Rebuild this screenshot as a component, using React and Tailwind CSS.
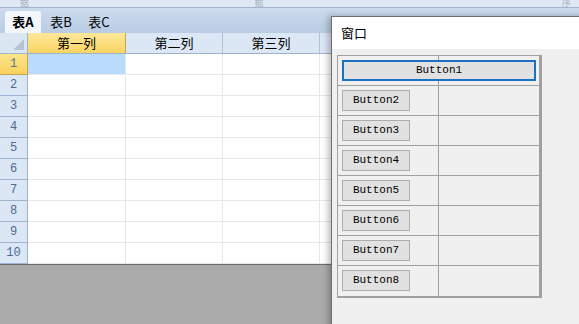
export default function App() {
  const rows = [1, 2, 3, 4, 5, 6, 7, 8, 9, 10];
  const cols = ["第一列", "第二列", "第三列", "第四列"];
  const btns = ["Button2", "Button3", "Button4", "Button5", "Button6", "Button7", "Button8"];
  const cjk = { fontFamily: '"Noto Sans CJK SC", "Noto Sans", sans-serif' };
  const mono = { fontFamily: '"Liberation Mono", "DejaVu Sans Mono", monospace' };
  return (
    <div className="relative w-[579px] h-[324px] overflow-hidden bg-[#ababab]" style={cjk}>
      <div className="flex flex-col">
        <div className="h-[7px] bg-[#dfe9f5] overflow-hidden flex items-end">
          <span className="ml-[20px] h-[7px] overflow-hidden flex items-end text-[9px] leading-[9px] text-[#a3aebb]">导入数据</span>
          <span className="ml-[200px] h-[7px] overflow-hidden flex items-end text-[9px] leading-[9px] text-[#a3aebb]">数据</span>
          <span className="ml-[290px] h-[7px] overflow-hidden flex items-end text-[9px] leading-[9px] text-[#a3aebb]">排序</span>
        </div>
        <div className="h-px bg-[#a3b6cd]" />
        <div className="h-[25px] bg-gradient-to-b from-[#ccdbee] to-[#b9cce3] flex items-end pl-[5px] gap-[2px]">
          <div className="h-[22px] w-[36px] bg-[#f3f7fc] rounded-t-[3px] flex items-center justify-center text-[13px] font-bold text-black">表A</div>
          <div className="h-[22px] w-[36px] flex items-center justify-center text-[13px] text-black">表B</div>
          <div className="h-[22px] w-[36px] flex items-center justify-center text-[13px] text-black">表C</div>
        </div>
        <div className="bg-white">
          <div className="flex h-[21px] border-b border-[#9eb3cc]">
            <div className="w-[28px] shrink-0 bg-[#dbe6f3] border-r border-[#9eb3cc] relative">
              <svg className="absolute right-[3px] bottom-[3px]" width="11" height="11" viewBox="0 0 11 11">
                <polygon points="11,0 11,11 0,11" fill="#b4c3d6" />
              </svg>
            </div>
            {cols.map((c, i) => (
              <div
                key={c}
                className={
                  i === 0
                    ? "w-[98px] shrink-0 bg-gradient-to-b from-[#fde79a] to-[#f9d461] border-r border-[#c9a550] flex items-center justify-center text-[13px] text-black"
                    : "w-[97px] shrink-0 bg-[#dbe7f4] border-r border-[#afc2d8] flex items-center justify-center text-[13px] text-black"
                }
              >
                {c}
              </div>
            ))}
          </div>
          {rows.map((r) => (
            <div key={r} className="flex h-[21px]">
              <div
                className={
                  r === 1
                    ? "w-[28px] shrink-0 bg-gradient-to-b from-[#fde38a] to-[#f9d25d] border-r border-b border-[#c9a550] flex items-center justify-center text-[12px] text-[#5a6f8c]"
                    : "w-[28px] shrink-0 bg-[#dbe7f4] border-r border-b border-[#9eb3cc] flex items-center justify-center text-[12px] text-[#4d6a93]"
                }
                style={mono}
              >
                {r}
              </div>
              <div className={(r === 1 ? "bg-[#b9dbfc] " : "") + "w-[98px] shrink-0 border-r border-b border-[#e8e8e8]"} />
              <div className="w-[97px] shrink-0 border-r border-b border-[#e8e8e8]" />
              <div className="w-[97px] shrink-0 border-r border-b border-[#e8e8e8]" />
              <div className="w-[97px] shrink-0 border-r border-b border-[#e8e8e8]" />
            </div>
          ))}
        </div>
        <div className="h-px bg-[#6b6b6b]" />
      </div>

      <div className="absolute left-[331px] top-[16px] w-[260px] h-[320px] border-l border-t border-[#6e6e6e] bg-[#f0f0f0] shadow-[-3px_0_6px_rgba(0,0,0,0.25)] flex flex-col">
        <div className="h-[32px] bg-white flex items-center pl-[9px] text-[13px] text-black">窗口</div>
        <div className="pl-[5px] pt-[6px]">
          <div className="w-[205px] border-l border-t border-[#a0a0a0] border-r-[3px] border-r-[#a0a0a0] border-b-2 border-b-[#a0a0a0] flex flex-col">
            <div className="h-[30px] border-b border-[#a0a0a0] relative flex">
              <div className="w-[101px] border-r border-[#a0a0a0]" />
              <div className="absolute left-[4px] top-[4px] w-[194px] h-[21px] border-2 border-[#1a72c0] bg-[#e1e1e1] flex items-center justify-center text-[11px] text-black" style={mono}>
                Button1
              </div>
            </div>
            {btns.map((b, i) => (
              <div key={b} className={"h-[30px] flex " + (i < btns.length - 1 ? "border-b border-[#a0a0a0]" : "")}>
                <div className="w-[101px] border-r border-[#a0a0a0] pl-[4px] pt-[4px]">
                  <div className="w-[68px] h-[21px] border border-[#adadad] bg-[#e1e1e1] flex items-center justify-center text-[11px] text-black" style={mono}>
                    {b}
                  </div>
                </div>
                <div className="flex-1" />
              </div>
            ))}
          </div>
        </div>
      </div>
    </div>
  );
}
